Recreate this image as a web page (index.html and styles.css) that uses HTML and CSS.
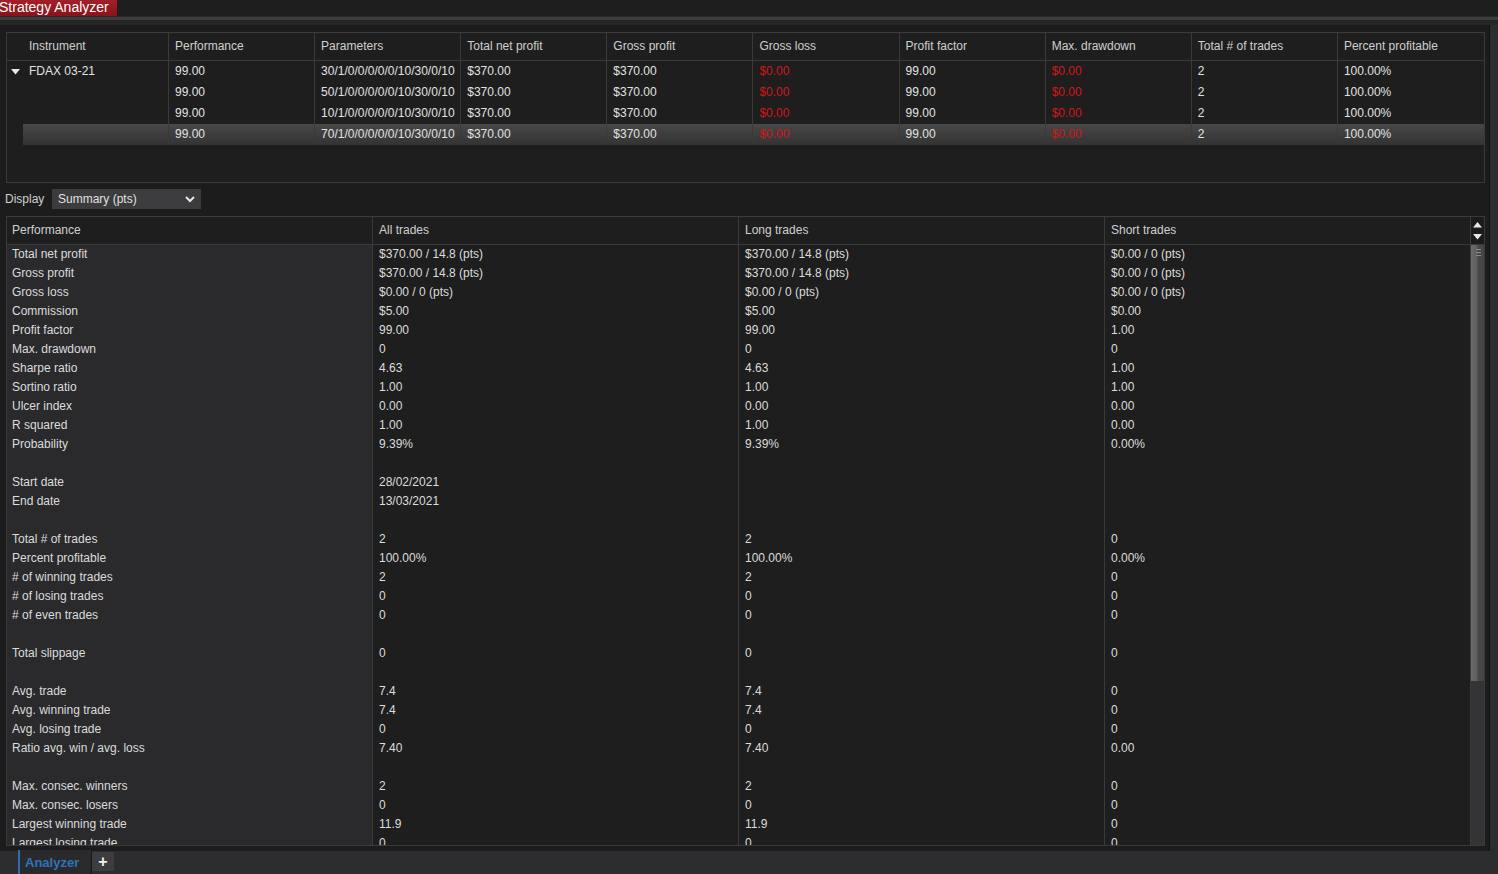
FILE: index.html
```html
<!DOCTYPE html>
<html>
<head>
<meta charset="utf-8">
<link rel="stylesheet" href="styles.css">
</head>
<body>
<div class="titlebar"><div class="title-tab">Strategy Analyzer</div></div>
<div class="sepbar"></div>
<div class="workspace">
  <div class="content">
    <div class="results">
      <div class="rrow rhead">
        <div class="rc first">Instrument</div><div class="rc">Performance</div><div class="rc">Parameters</div><div class="rc">Total net profit</div><div class="rc">Gross profit</div><div class="rc">Gross loss</div><div class="rc">Profit factor</div><div class="rc">Max. drawdown</div><div class="rc">Total # of trades</div><div class="rc">Percent profitable</div>
      </div>
      <div class="rrow">
        <div class="rc first"><svg class="tri" width="9" height="6" viewBox="0 0 9 6"><polygon points="0,0 9,0 4.5,5.5" fill="#e8e8e8"/></svg>FDAX 03-21</div><div class="rc">99.00</div><div class="rc">30/1/0/0/0/0/0/10/30/0/10</div><div class="rc">$370.00</div><div class="rc">$370.00</div><div class="rc neg">$0.00</div><div class="rc">99.00</div><div class="rc neg">$0.00</div><div class="rc">2</div><div class="rc">100.00%</div>
      </div>
      <div class="rrow">
        <div class="rc first"></div><div class="rc">99.00</div><div class="rc">50/1/0/0/0/0/0/10/30/0/10</div><div class="rc">$370.00</div><div class="rc">$370.00</div><div class="rc neg">$0.00</div><div class="rc">99.00</div><div class="rc neg">$0.00</div><div class="rc">2</div><div class="rc">100.00%</div>
      </div>
      <div class="rrow">
        <div class="rc first"></div><div class="rc">99.00</div><div class="rc">10/1/0/0/0/0/0/10/30/0/10</div><div class="rc">$370.00</div><div class="rc">$370.00</div><div class="rc neg">$0.00</div><div class="rc">99.00</div><div class="rc neg">$0.00</div><div class="rc">2</div><div class="rc">100.00%</div>
      </div>
      <div class="rrow selected">
        <div class="rc first"></div><div class="rc">99.00</div><div class="rc">70/1/0/0/0/0/0/10/30/0/10</div><div class="rc">$370.00</div><div class="rc">$370.00</div><div class="rc neg">$0.00</div><div class="rc">99.00</div><div class="rc neg">$0.00</div><div class="rc">2</div><div class="rc">100.00%</div>
      </div>
    </div>

    <div class="display-row">
      <span class="display-label">Display</span>
      <div class="select"><span>Summary (pts)</span><svg width="10" height="7" viewBox="0 0 10 7"><polyline points="1,1 5,5 9,1" fill="none" stroke="#e6e6e6" stroke-width="2"/></svg></div>
    </div>

    <div class="stats">
      <div class="stats-body">
        <div class="srow shead"><div class="sc">Performance</div><div class="sc">All trades</div><div class="sc">Long trades</div><div class="sc">Short trades</div></div>
        <div class="srow"><div class="sc lbl">Total net profit</div><div class="sc">$370.00 / 14.8 (pts)</div><div class="sc">$370.00 / 14.8 (pts)</div><div class="sc">$0.00 / 0 (pts)</div></div>
        <div class="srow"><div class="sc lbl">Gross profit</div><div class="sc">$370.00 / 14.8 (pts)</div><div class="sc">$370.00 / 14.8 (pts)</div><div class="sc">$0.00 / 0 (pts)</div></div>
        <div class="srow"><div class="sc lbl">Gross loss</div><div class="sc">$0.00 / 0 (pts)</div><div class="sc">$0.00 / 0 (pts)</div><div class="sc">$0.00 / 0 (pts)</div></div>
        <div class="srow"><div class="sc lbl">Commission</div><div class="sc">$5.00</div><div class="sc">$5.00</div><div class="sc">$0.00</div></div>
        <div class="srow"><div class="sc lbl">Profit factor</div><div class="sc">99.00</div><div class="sc">99.00</div><div class="sc">1.00</div></div>
        <div class="srow"><div class="sc lbl">Max. drawdown</div><div class="sc">0</div><div class="sc">0</div><div class="sc">0</div></div>
        <div class="srow"><div class="sc lbl">Sharpe ratio</div><div class="sc">4.63</div><div class="sc">4.63</div><div class="sc">1.00</div></div>
        <div class="srow"><div class="sc lbl">Sortino ratio</div><div class="sc">1.00</div><div class="sc">1.00</div><div class="sc">1.00</div></div>
        <div class="srow"><div class="sc lbl">Ulcer index</div><div class="sc">0.00</div><div class="sc">0.00</div><div class="sc">0.00</div></div>
        <div class="srow"><div class="sc lbl">R squared</div><div class="sc">1.00</div><div class="sc">1.00</div><div class="sc">0.00</div></div>
        <div class="srow"><div class="sc lbl">Probability</div><div class="sc">9.39%</div><div class="sc">9.39%</div><div class="sc">0.00%</div></div>
        <div class="srow"><div class="sc lbl"></div><div class="sc"></div><div class="sc"></div><div class="sc"></div></div>
        <div class="srow"><div class="sc lbl">Start date</div><div class="sc">28/02/2021</div><div class="sc"></div><div class="sc"></div></div>
        <div class="srow"><div class="sc lbl">End date</div><div class="sc">13/03/2021</div><div class="sc"></div><div class="sc"></div></div>
        <div class="srow"><div class="sc lbl"></div><div class="sc"></div><div class="sc"></div><div class="sc"></div></div>
        <div class="srow"><div class="sc lbl">Total # of trades</div><div class="sc">2</div><div class="sc">2</div><div class="sc">0</div></div>
        <div class="srow"><div class="sc lbl">Percent profitable</div><div class="sc">100.00%</div><div class="sc">100.00%</div><div class="sc">0.00%</div></div>
        <div class="srow"><div class="sc lbl"># of winning trades</div><div class="sc">2</div><div class="sc">2</div><div class="sc">0</div></div>
        <div class="srow"><div class="sc lbl"># of losing trades</div><div class="sc">0</div><div class="sc">0</div><div class="sc">0</div></div>
        <div class="srow"><div class="sc lbl"># of even trades</div><div class="sc">0</div><div class="sc">0</div><div class="sc">0</div></div>
        <div class="srow"><div class="sc lbl"></div><div class="sc"></div><div class="sc"></div><div class="sc"></div></div>
        <div class="srow"><div class="sc lbl">Total slippage</div><div class="sc">0</div><div class="sc">0</div><div class="sc">0</div></div>
        <div class="srow"><div class="sc lbl"></div><div class="sc"></div><div class="sc"></div><div class="sc"></div></div>
        <div class="srow"><div class="sc lbl">Avg. trade</div><div class="sc">7.4</div><div class="sc">7.4</div><div class="sc">0</div></div>
        <div class="srow"><div class="sc lbl">Avg. winning trade</div><div class="sc">7.4</div><div class="sc">7.4</div><div class="sc">0</div></div>
        <div class="srow"><div class="sc lbl">Avg. losing trade</div><div class="sc">0</div><div class="sc">0</div><div class="sc">0</div></div>
        <div class="srow"><div class="sc lbl">Ratio avg. win / avg. loss</div><div class="sc">7.40</div><div class="sc">7.40</div><div class="sc">0.00</div></div>
        <div class="srow"><div class="sc lbl"></div><div class="sc"></div><div class="sc"></div><div class="sc"></div></div>
        <div class="srow"><div class="sc lbl">Max. consec. winners</div><div class="sc">2</div><div class="sc">2</div><div class="sc">0</div></div>
        <div class="srow"><div class="sc lbl">Max. consec. losers</div><div class="sc">0</div><div class="sc">0</div><div class="sc">0</div></div>
        <div class="srow"><div class="sc lbl">Largest winning trade</div><div class="sc">11.9</div><div class="sc">11.9</div><div class="sc">0</div></div>
        <div class="srow"><div class="sc lbl">Largest losing trade</div><div class="sc">0</div><div class="sc">0</div><div class="sc">0</div></div>
      </div>
      <div class="vscroll">
        <div class="vs-arrows">
          <svg width="9" height="6" viewBox="0 0 9 6"><polygon points="0,5.5 9,5.5 4.5,0" fill="#e8e8e8"/></svg>
          <svg width="9" height="6" viewBox="0 0 9 6"><polygon points="0,0 9,0 4.5,5.5" fill="#e8e8e8"/></svg>
        </div>
        <div class="vs-track"><div class="vs-thumb"><i></i><i></i><i></i></div></div>
      </div>
    </div>
  </div>
  <div class="rightstrip"></div>
</div>
<div class="tabbar">
  <div class="tab">Analyzer</div>
  <div class="tab-add">+</div>
</div>
</body>
</html>
```

FILE: styles.css
```css
* { box-sizing: border-box; }
html, body { margin: 0; padding: 0; }
body {
  width: 1498px;
  height: 874px;
  overflow: hidden;
  background: #1e1e1e;
  font-family: "Liberation Sans", Arial, sans-serif;
  font-size: 12px;
  color: #dedede;
}

.titlebar { height: 16px; background: #1e1e1e; display: flex; }
.title-tab {
  width: 117px;
  height: 16px;
  line-height: 14px;
  font-size: 14px;
  color: #ffffff;
  text-indent: -1px;
  white-space: nowrap;
  overflow: hidden;
  background: linear-gradient(#a51e27, #86141b);
}
.sepbar {
  height: 9px;
  background: linear-gradient(#2a2a2a 0, #2a2a2a 1px, #3e3e3e 1px, #3e3e3e 4px, #262626 4px, #262626 9px);
}

.workspace { display: flex; height: 826px; }
.content { width: 1489px; padding: 7px 0 0 6px; display: flex; flex-direction: column; background: #1c1c1c; }
.rightstrip { width: 9px; background: #2d2d30; border-left: 1px solid #141414; }

/* top results grid */
.results {
  width: 1479px;
  height: 151px;
  border: 1px solid #3a3a3a;
  background: #1e1e1e;
  flex: none;
}
.rrow { display: grid; grid-template-columns: 162px repeat(9, 1fr); height: 21px; }
.rrow.rhead { height: 28px; border-bottom: 1px solid #3a3a3a; }
.rc {
  border-right: 1px solid #3a3a3a;
  padding-left: 6px;
  line-height: 21px;
  white-space: nowrap;
  overflow: hidden;
  color: #e2e2e2;
}
.rc:last-child { border-right: none; }
.rhead .rc { line-height: 27px; color: #d0d0d0; }
.rc.first { padding-left: 22px; position: relative; }
.tri { position: absolute; left: 4px; top: 8px; }
.rc.neg { color: #d31616; }
.rrow.selected .rc { background: linear-gradient(#484848, #333333); }
.rrow.selected .rc.first {
  background: linear-gradient(#484848, #333333) no-repeat 16px 0 / calc(100% - 16px) 100%;
}

/* display selector */
.display-row { display: flex; align-items: center; height: 20px; margin-top: 6px; margin-left: -1px; flex: none; }
.display-label { color: #d0d0d0; width: 47px; }
.select {
  width: 149px;
  height: 20px;
  background: #3c3c3f;
  display: flex;
  align-items: center;
  justify-content: space-between;
  padding: 0 6px;
  color: #e0e0e0;
}

/* statistics grid */
.stats {
  margin-top: 7px;
  width: 1479px;
  height: 630px;
  border: 1px solid #3a3a3a;
  display: flex;
  background: #1e1e1e;
  flex: none;
}
.stats-body { flex: 1; overflow: hidden; }
.srow { display: grid; grid-template-columns: repeat(4, 1fr); height: 19px; }
.srow.shead { height: 28px; border-bottom: 1px solid #3a3a3a; }
.sc {
  border-right: 1px solid #3a3a3a;
  padding-left: 6px;
  line-height: 19px;
  white-space: nowrap;
  overflow: hidden;
  color: #dcdcdc;
}
.shead .sc { line-height: 27px; color: #d0d0d0; }
.sc.lbl, .shead .sc:first-child { padding-left: 5px; }
.sc.lbl { background: #2a2a2d; }
.vscroll { width: 13px; display: flex; flex-direction: column; }
.vs-arrows {
  height: 28px;
  background: #1b1b1b;
  display: flex;
  flex-direction: column;
  align-items: center;
  justify-content: center;
  gap: 6px;
  border-bottom: 1px solid #3a3a3a;
}
.vs-track { flex: 1; background: #343436; }
.vs-thumb {
  height: 436px;
  background: linear-gradient(90deg, #6c6c6c 0, #5e5e5e 6px, #474747 7px, #454545 100%);
  padding-top: 4px;
}
.vs-thumb i { display: block; height: 1px; margin: 0 3px 2px 5px; background: #8a8a8a; }

/* bottom tab bar */
.tabbar {
  height: 23px;
  background: #2d2d30;
  display: flex;
  align-items: flex-start;
  padding-left: 18px;
}
.tab {
  width: 74px;
  height: 24px;
  margin-top: -1px;
  border-left: 2px solid #2d6db0;
  border-right: 1px solid #1a1a1a;
  color: #2f74ba;
  font-weight: bold;
  font-size: 13px;
  line-height: 25px;
  padding-left: 5px;
  background: #2a2a2d;
}
.tab-add {
  width: 22px;
  height: 19px;
  margin-top: 1px;
  background: #3d3d41;
  color: #f0f0f0;
  font-weight: bold;
  font-size: 16px;
  line-height: 19px;
  text-align: center;
}
```
